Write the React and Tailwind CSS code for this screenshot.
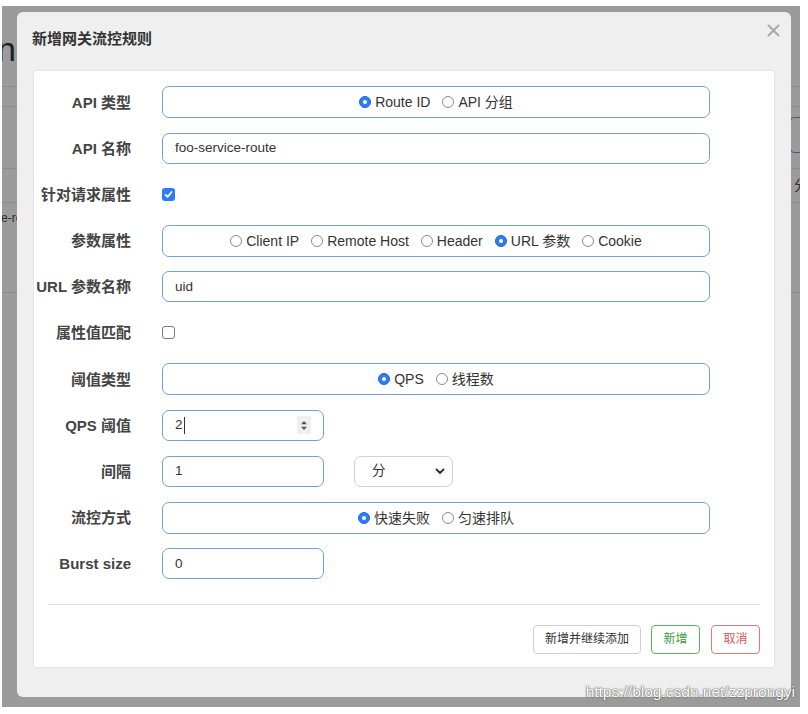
import React from "react";

const FONT = { fontFamily: '"Liberation Sans", Arial, "Noto Sans CJK SC", sans-serif' };

function RadioOn() {
  return (
    <span className="w-[12px] h-[12px] rounded-full bg-[#2d7cf6] border border-[#1f66d6] flex items-center justify-center shrink-0">
      <span className="w-[4px] h-[4px] rounded-full bg-white" />
    </span>
  );
}
function RadioOff() {
  return <span className="w-[12px] h-[12px] rounded-full bg-white border border-[#8a8a8a] shrink-0" />;
}

function Opt({ on, children }) {
  return (
    <span className="flex items-center gap-[4px] text-[14px] text-[#333] leading-none whitespace-nowrap">
      {on ? <RadioOn /> : <RadioOff />}
      <span>{children}</span>
    </span>
  );
}

function Row({ label, children }) {
  return (
    <div className="flex items-center h-[32px]">
      <div className="w-[98px] text-right text-[15px] font-bold text-[#444] leading-none whitespace-nowrap">{label}</div>
      <div className="ml-[31px] flex items-center h-full">{children}</div>
    </div>
  );
}

function RadioBox({ children }) {
  return (
    <div className="w-[548px] h-[32px] border border-[#73a0cf] rounded-[7px] flex items-center justify-center gap-[12px] bg-white">
      {children}
    </div>
  );
}

function TextBox({ w, children }) {
  return (
    <div className={`${w} h-[31px] border border-[#73a0cf] rounded-[7px] flex items-center pl-[12px] pr-[12px] text-[13.5px] text-[#333] bg-white`}>
      {children}
    </div>
  );
}

export default function App() {
  return (
    <div className="relative w-[808px] h-[714px] bg-white overflow-hidden" style={FONT}>
      {/* dimmed page underneath */}
      <div className="absolute left-[2px] top-[6px] w-[798px] h-[701px] bg-[#9b9b9b] overflow-hidden flex flex-col">
        <div className="h-[26px] shrink-0" />
        <div className="h-[54px] shrink-0 text-[34px] leading-[34px] text-[#1e1e1e] -ml-[5px]">n</div>
        <div className="h-[21px] shrink-0 border-t border-b border-[#8c8c8c]" />
        <div className="h-[61px] shrink-0 flex justify-end pt-[10px]">
          <div className="w-[40px] h-[36px] border border-[#3f5d7d] rounded-[4px] -mr-[30px]" />
        </div>
        <div className="h-[35px] shrink-0 border-t border-b border-[#8c8c8c] flex items-center justify-end">
          <span className="text-[14px] text-[#2a2a2a] -mr-[8px]">分</span>
        </div>
        <div className="h-[90px] shrink-0 border-b border-[#8c8c8c] pt-[8px]">
          <span className="text-[12px] text-[#2a2a2a] -ml-[1px] block leading-[14px]">e-route</span>
        </div>
      </div>

      {/* modal */}
      <div className="absolute left-[17px] top-[12px] w-[774px] h-[685px] bg-[#efefef] rounded-[6px] flex flex-col">
        <div className="h-[58px] shrink-0 flex justify-between pl-[15px] pr-[11px]">
          <div className="pt-[17px] text-[15px] leading-[20px] font-bold text-[#333]">新增网关流控规则</div>
          <svg className="mt-[12px]" width="13" height="13" viewBox="0 0 13 13">
            <path d="M1.5 1.5 L11.5 11.5 M11.5 1.5 L1.5 11.5" stroke="#a8a8a8" strokeWidth="2" strokeLinecap="round" />
          </svg>
        </div>

        <div className="mx-[16px] h-[598px] bg-white rounded-[4px] border border-[#e6e6e6] flex flex-col pt-[15px] px-[14px] pb-[13px]">
          <div className="flex flex-col gap-[14.2px] -ml-[15px]">
            <Row label="API 类型">
              <RadioBox>
                <Opt on>Route ID</Opt>
                <Opt>API 分组</Opt>
              </RadioBox>
            </Row>
            <Row label="API 名称">
              <TextBox w="w-[548px]">foo-service-route</TextBox>
            </Row>
            <Row label="针对请求属性">
              <span className="w-[13px] h-[13px] rounded-[3px] bg-[#2d7cf6] flex items-center justify-center">
                <svg width="9" height="9" viewBox="0 0 9 9">
                  <path d="M1.5 4.8 L3.6 6.8 L7.6 2" stroke="white" strokeWidth="1.8" fill="none" strokeLinecap="round" strokeLinejoin="round" />
                </svg>
              </span>
            </Row>
            <Row label="参数属性">
              <RadioBox>
                <Opt>Client IP</Opt>
                <Opt>Remote Host</Opt>
                <Opt>Header</Opt>
                <Opt on>URL 参数</Opt>
                <Opt>Cookie</Opt>
              </RadioBox>
            </Row>
            <Row label="URL 参数名称">
              <TextBox w="w-[548px]">uid</TextBox>
            </Row>
            <Row label="属性值匹配">
              <span className="w-[13px] h-[13px] rounded-[3px] bg-white border border-[#7a7a7a]" />
            </Row>
            <Row label="阈值类型">
              <RadioBox>
                <Opt on>QPS</Opt>
                <Opt>线程数</Opt>
              </RadioBox>
            </Row>
            <Row label="QPS 阈值">
              <div className="w-[162px] h-[31px] border border-[#73a0cf] rounded-[7px] flex items-center justify-between pl-[12px] pr-[12px] text-[13.5px] text-[#333] bg-white">
                <span className="flex items-center">
                  2<span className="w-[1px] h-[17px] bg-[#333] ml-[1px]" />
                </span>
                <span className="w-[14px] h-[18px] bg-[#efefef] flex items-center justify-center">
                  <svg width="8" height="11" viewBox="0 0 8 11">
                    <path d="M1 4.2 L4 1 L7 4.2 Z M1 6.8 L4 10 L7 6.8 Z" fill="#555" />
                  </svg>
                </span>
              </div>
            </Row>
            <Row label="间隔">
              <div className="flex items-center gap-[30px]">
                <TextBox w="w-[162px]">1</TextBox>
                <div className="w-[99px] h-[31px] border border-[#d2d2d2] rounded-[7px] flex items-center justify-between pl-[17px] pr-[7px] text-[13.5px] text-[#333] bg-white">
                  <span>分</span>
                  <svg width="10" height="7" viewBox="0 0 10 7">
                    <path d="M1.5 1.5 L5 5 L8.5 1.5" stroke="#333" strokeWidth="2" fill="none" strokeLinecap="round" strokeLinejoin="round" />
                  </svg>
                </div>
              </div>
            </Row>
            <Row label="流控方式">
              <RadioBox>
                <Opt on>快速失败</Opt>
                <Opt>匀速排队</Opt>
              </RadioBox>
            </Row>
            <Row label="Burst size">
              <TextBox w="w-[162px]">0</TextBox>
            </Row>
          </div>

          <div className="mt-[24px] h-px bg-[#e3e3e3]" />

          <div className="mt-[20px] flex justify-end gap-[10px]">
            <button className="h-[29px] w-[108px] border border-[#cfcfcf] rounded-[4px] bg-white text-[12px] text-[#333]">新增并继续添加</button>
            <button className="h-[29px] w-[49px] border border-[#5cb85c] rounded-[4px] bg-white text-[12px] text-[#3d9a3d]">新增</button>
            <button className="h-[29px] w-[49px] ml-[1px] border border-[#df7a7a] rounded-[4px] bg-white text-[12px] text-[#d9534f]">取消</button>
          </div>
        </div>
      </div>

      {/* watermark */}
      <div className="absolute right-[13px] top-[683px] text-[15.5px] leading-[18px] text-white [text-shadow:0_0_2px_#555,0_0_1px_#444] whitespace-nowrap">
        https://blog.csdn.net/zzprongyi
      </div>
    </div>
  );
}
